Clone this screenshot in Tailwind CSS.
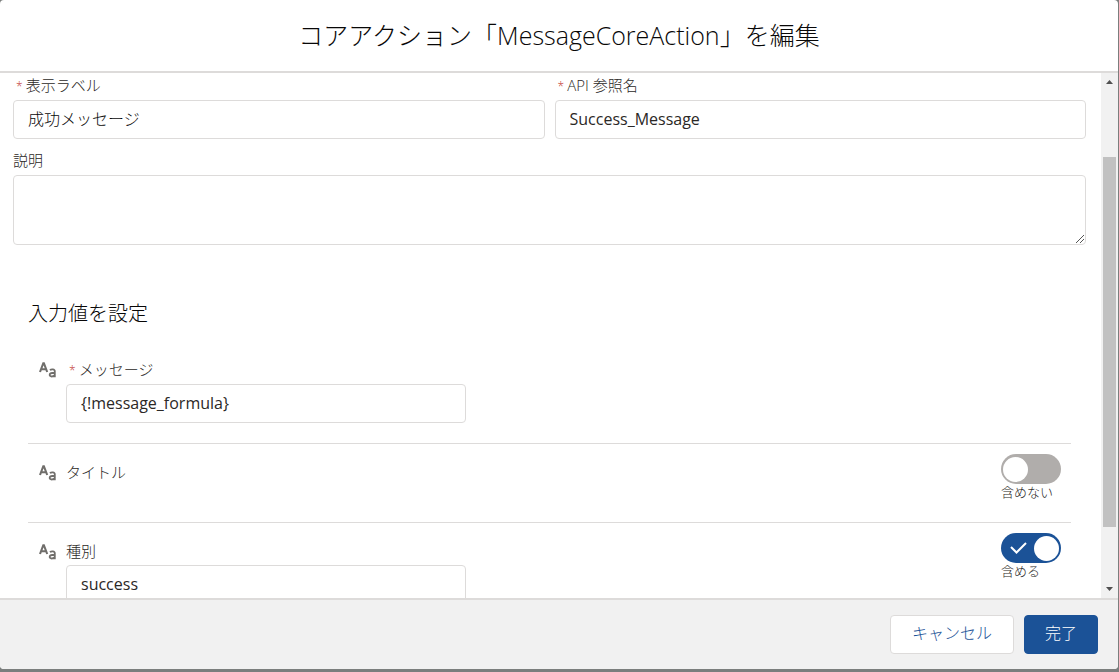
<!DOCTYPE html>
<html lang="ja">
<head>
<meta charset="utf-8">
<meta name="viewport" content="width=device-width, initial-scale=1">
<title>コアアクション「MessageCoreAction」を編集</title>
<script src="https://cdn.jsdelivr.net/npm/@tailwindcss/browser@4"></script>
</head>
<body class="flex h-screen flex-col overflow-hidden bg-[#7b7e7d] pr-px pb-[3px] font-['Open_Sans','Noto_Sans_CJK_JP',sans-serif] text-[#2b2826]">
<svg class="hidden" aria-hidden="true">
  <symbol id="text-type" viewBox="0 0 18 16">
    <g fill="none" stroke="#706e6b">
      <path stroke-width="2.100" d="M1 10 4.300 1.200h.6L8.200 10M2.300 7.200H7"/>
      <path stroke-width="1.800" d="M10.900 7.900c1.300-.8 4.900-1.200 4.900 1.400v6M15.800 11h-2.600c-3.200 0-3.300 3.500-.6 3.500 1.500 0 2.600-.6 3.200-1.500"/>
    </g>
  </symbol>
</svg>
<section role="dialog" aria-labelledby="title" class="flex min-h-0 flex-1 flex-col overflow-hidden rounded bg-white">
  <header class="flex h-[73px] shrink-0 items-center justify-center border-b-2 border-[#dddbda] pb-[2px]">
    <h1 id="title" class="text-[25px] leading-8 font-light text-[#080707]">コアアクション「MessageCoreAction」を編集</h1>
  </header>

  <div class="flex min-h-0 flex-1">
    <main class="min-w-0 flex-1 overflow-hidden pt-[2px] pr-[15px] pl-[13px]">
      <div class="grid grid-cols-2 gap-[10px]">
        <div>
          <label for="label" class="block h-[25px] pl-[3px] text-[15px] leading-5 font-light"><span class="text-xs text-[#c23934]">* </span>表示ラベル</label>
          <input id="label" value="成功メッセージ" class="block h-[39px] w-full rounded border border-[#dddbda] px-[14px] pb-[3px] text-base font-light text-[#080707]">
        </div>
        <div>
          <label for="api" class="block h-[25px] pl-[3px] text-[15px] leading-5 font-light"><span class="text-xs text-[#c23934]">* </span>API 参照名</label>
          <input id="api" value="Success_Message" class="block h-[39px] w-full rounded border border-[#dddbda] px-[14px] pb-[2px] text-base text-[#2b2826]">
        </div>
      </div>
      <label for="desc" class="mt-[11px] block h-[25px] text-[15px] leading-5 font-light">説明</label>
      <div class="relative">
        <textarea id="desc" class="block h-[70px] w-full resize-none rounded border border-[#dddbda]"></textarea>
        <svg class="absolute right-[2px] bottom-[2px] h-2 w-2" viewBox="0 0 8 8" stroke="#555" aria-hidden="true"><path d="M0 8 8 0M4 8l4-4"/></svg>
      </div>

      <section class="mr-[15px] ml-[15px] pt-[55px]">
        <h2 class="text-xl leading-7 font-light text-[#080707]">入力値を設定</h2>
        <div class="mt-[31px] flex h-[85px] border-b border-[#dddbda] pl-[11px]">
          <svg class="mt-[3px] h-4 w-[18px] shrink-0" aria-hidden="true"><use href="#text-type"/></svg>
          <div class="ml-[9px] w-[400px]">
            <label for="message" class="block h-[25px] pl-[3px] text-[15px] leading-5 font-light"><span class="text-xs text-[#c23934]">* </span>メッセージ</label>
            <input id="message" value="{!message_formula}" class="block h-[39px] w-full rounded border border-[#dddbda] px-[14px] pb-[2px] text-base text-[#2b2826]">
          </div>
        </div>
        <div class="flex h-[79px] border-b border-[#dddbda] pr-[10px] pl-[11px]">
          <svg class="mt-[21px] h-4 w-[18px] shrink-0" aria-hidden="true"><use href="#text-type"/></svg>
          <span class="mt-[18px] ml-[9px] flex-1 text-[15px] leading-5 font-light">タイトル</span>
          <label class="mt-[10px] block w-[60px]">
            <input type="checkbox" aria-label="タイトルを含める" class="peer sr-only">
            <span class="flex h-[30px] items-center rounded-full bg-[#b0adab] pl-[2px]"><span class="size-[25px] rounded-full bg-white"></span></span>
            <span class="block text-[13px] leading-4 font-light whitespace-nowrap">含めない</span>
          </label>
        </div>
        <div class="flex pr-[10px] pl-[11px]">
          <svg class="mt-[21px] h-4 w-[18px] shrink-0" aria-hidden="true"><use href="#text-type"/></svg>
          <div class="mt-[18px] ml-[9px] w-[400px]">
            <label for="kind" class="block h-6 text-[15px] leading-5 font-light">種別</label>
            <input id="kind" value="success" class="block h-[39px] w-full rounded border border-[#dddbda] px-[14px] pb-[2px] text-base text-[#2b2826]">
          </div>
          <label class="mt-[10px] ml-auto block w-[60px]">
            <input type="checkbox" checked aria-label="種別を含める" class="peer sr-only">
            <span class="flex h-[30px] items-center justify-between rounded-full bg-[#1b5297] pr-[2px] pl-[9px]">
              <svg class="h-3 w-[17px]" viewBox="0 0 17 12" fill="none" stroke="#fff" stroke-width="2" aria-hidden="true"><path d="m1 5 5.500 5.500L16 1"/></svg>
              <span class="size-[25px] rounded-full bg-white"></span>
            </span>
            <span class="block text-[13px] leading-4 font-light whitespace-nowrap">含める</span>
          </label>
        </div>
      </section>
    </main>
    <div class="flex w-[17px] shrink-0 flex-col items-center bg-[#f1f1f1]" aria-hidden="true">
      <svg class="mt-[7px] h-1 w-[7px]" viewBox="0 0 7 4" fill="#505050"><path d="M0 4h7L3.500 0z"/></svg>
      <div class="mt-[73px] w-[13px] flex-[370] bg-[#c1c1c1]"></div>
      <div class="flex-[60]"></div>
      <svg class="mb-[7px] h-1 w-[7px]" viewBox="0 0 7 4" fill="#505050"><path d="M0 0h7L3.500 4z"/></svg>
    </div>
  </div>

  <footer class="flex shrink-0 justify-end gap-[10px] border-t-2 border-[#dddbda] bg-[#f1f1f1] px-5 py-[15px]">
    <button type="button" class="h-[39px] rounded border border-[#dddbda] bg-white px-[21px] pb-[3px] text-base font-light text-[#1b5297]">キャンセル</button>
    <button type="button" class="h-[39px] rounded border border-[#1b5297] bg-[#1b5297] px-5 pb-[3px] text-base font-light text-white">完了</button>
  </footer>
</section>
</body>
</html>
